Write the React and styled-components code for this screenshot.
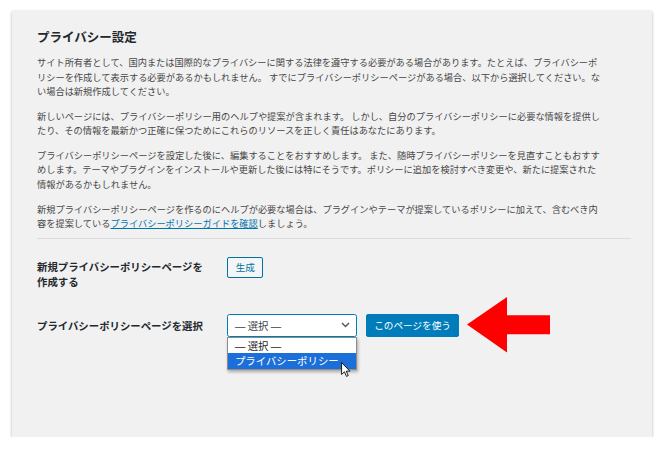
import React from "react";
import styled, { createGlobalStyle } from "styled-components";

const Global = createGlobalStyle`
  html, body { margin: 0; padding: 0; background: #ffffff; }
  body { font-family: "Noto Sans CJK JP", "Noto Sans", sans-serif; }
  * { box-sizing: border-box; }
`;

const Page = styled.div`
  padding: 11px 12px 0 12px;
`;

const Card = styled.section`
  width: 640px;
  height: 426px;
  background: #f1f1f1;
  box-shadow: 0 1px 3px rgba(0, 0, 0, 0.3);
  padding: 17.5px 21px 0 25px;
`;

const Title = styled.h2`
  margin: 0;
  font-size: 12.5px;
  line-height: 16px;
  font-weight: 700;
  color: #23282d;
`;

const Text = styled.p`
  margin: ${(p) => (p.$first ? "10.6px" : "10.4px")} 0 0;
  font-size: 9.22px;
  line-height: 14.4px;
  color: #474747;
  white-space: nowrap;
`;

const Link = styled.a`
  color: #0073aa;
  text-decoration: underline;
`;

const Divider = styled.hr`
  margin: 7.9px 0 0;
  border: 0;
  border-top: 1px solid #dcdcde;
  height: 0;
`;

const Form = styled.div`
  margin-top: 17.8px;
  display: flex;
  flex-direction: column;
`;

const Row = styled.div`
  display: grid;
  grid-template-columns: 190.3px 1fr;
  align-items: start;
  margin-top: ${(p) => p.$gap || 0}px;
`;

const Label = styled.div`
  font-size: 10.4px;
  line-height: 14.6px;
  font-weight: 600;
  color: #23282d;
  padding-top: ${(p) => p.$pad}px;
`;

const Field = styled.div`
  position: relative;
  display: flex;
  align-items: flex-start;
  gap: 8.4px;
`;

const SecondaryButton = styled.button`
  height: 21px;
  padding: 0 7.4px;
  font-family: inherit;
  font-size: 9.6px;
  line-height: 19px;
  color: #0071a1;
  background: #f3f5f6;
  border: 1px solid #0071a1;
  border-radius: 2px;
`;

const PrimaryButton = styled.button`
  height: 22.4px;
  padding: 0 7.6px;
  font-family: inherit;
  font-size: 9.6px;
  line-height: 20px;
  color: #ffffff;
  background: #007cba;
  border: 1px solid #007cba;
  border-radius: 2px;
`;

const SelectWrap = styled.div`
  position: relative;
  width: 130px;
`;

const SelectBox = styled.div`
  width: 130px;
  height: 22.4px;
  border: 1px solid #007cba;
  border-radius: 2.5px;
  background: #ffffff;
  display: flex;
  align-items: center;
  justify-content: space-between;
  padding: 0 6px 0 6.7px;
  font-size: 10.4px;
  color: #3c434a;
`;

const Dash = styled.span`
  font-family: "Liberation Sans", Arial, sans-serif;
`;

const Dropdown = styled.div`
  position: absolute;
  top: 100%;
  left: 0;
  width: 130px;
  border: 1px solid #8d8d8d;
  background: #ffffff;
  box-shadow: 1px 2px 3px rgba(0, 0, 0, 0.3);
  z-index: 2;
`;

const Option = styled.div`
  height: 15.7px;
  line-height: 15.7px;
  padding-left: 6.7px;
  font-size: 10.4px;
  color: ${(p) => (p.$selected ? "#ffffff" : "#1d2327")};
  background: ${(p) => (p.$selected ? "#1c6fd8" : "#ffffff")};
`;

const Cursor = styled.svg`
  position: absolute;
  left: 114.2px;
  top: 47.7px;
  z-index: 3;
`;

const Annotation = styled.svg`
  position: absolute;
  left: 240px;
  top: -17.6px;
`;

const Choice = () => (
  <span>
    <Dash>—</Dash> 選択 <Dash>—</Dash>
  </span>
);

export default function App() {
  return (
    <>
      <Global />
      <Page>
        <Card>
          <Title>プライバシー設定</Title>
          <Text $first>
            サイト所有者として、国内または国際的なプライバシーに関する法律を遵守する必要がある場合があります。たとえば、プライバシーポ
            <br />
            リシーを作成して表示する必要があるかもしれません。 すでにプライバシーポリシーページがある場合、以下から選択してください。な
            <br />
            い場合は新規作成してください。
          </Text>
          <Text>
            新しいページには、プライバシーポリシー用のヘルプや提案が含まれます。 しかし、自分のプライバシーポリシーに必要な情報を提供し
            <br />
            たり、その情報を最新かつ正確に保つためにこれらのリソースを正しく責任はあなたにあります。
          </Text>
          <Text>
            プライバシーポリシーページを設定した後に、編集することをおすすめします。 また、随時プライバシーポリシーを見直すこともおすす
            <br />
            めします。テーマやプラグインをインストールや更新した後には特にそうです。ポリシーに追加を検討すべき変更や、新たに提案された
            <br />
            情報があるかもしれません。
          </Text>
          <Text>
            新規プライバシーポリシーページを作るのにヘルプが必要な場合は、プラグインやテーマが提案しているポリシーに加えて、含むべき内
            <br />
            容を提案している<Link href="#">プライバシーポリシーガイドを確認</Link>しましょう。
          </Text>
          <Divider />
          <Form>
            <Row>
              <Label $pad={3.4}>
                新規プライバシーポリシーページを
                <br />
                作成する
              </Label>
              <Field>
                <SecondaryButton>生成</SecondaryButton>
              </Field>
            </Row>
            <Row $gap={24.7}>
              <Label $pad={5.1}>プライバシーポリシーページを選択</Label>
              <Field>
                <SelectWrap>
                  <SelectBox>
                    <Choice />
                    <svg width="9" height="6" viewBox="0 0 9 6">
                      <path d="M1 1 L4.5 4.6 L8 1" fill="none" stroke="#50575e" strokeWidth="1.4" />
                    </svg>
                  </SelectBox>
                  <Dropdown>
                    <Option>
                      <Choice />
                    </Option>
                    <Option $selected>プライバシーポリシー</Option>
                  </Dropdown>
                  <Cursor width="9.5" height="15" viewBox="0 0 12 19">
                    <path
                      d="M0.7 0.7 L0.7 15.8 L4.3 12.4 L6.9 18.2 L9.2 17.2 L6.6 11.6 L11.3 11.6 Z"
                      fill="#ffffff"
                      stroke="#000000"
                      strokeWidth="1.1"
                      strokeLinejoin="round"
                    />
                  </Cursor>
                </SelectWrap>
                <PrimaryButton>このページを使う</PrimaryButton>
                <Annotation width="83" height="56" viewBox="0 0 83 56">
                  <polygon points="0,27.6 40,0 40,18.3 83,18.3 83,37.3 40,37.3 40,55.6" fill="#ff0000" />
                </Annotation>
              </Field>
            </Row>
          </Form>
        </Card>
      </Page>
    </>
  );
}
